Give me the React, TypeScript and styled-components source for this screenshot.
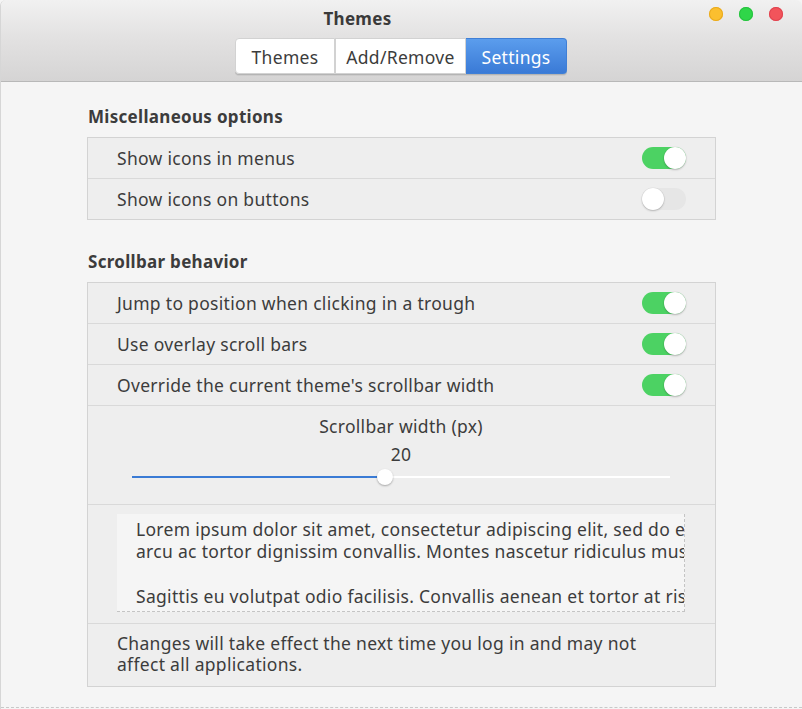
import React from "react";
import styled, { createGlobalStyle } from "styled-components";

const FONT = `"Noto Sans", "Open Sans", sans-serif`;

const Global = createGlobalStyle`
  html, body { margin: 0; padding: 0; background: #f5f5f5; }
  body { font-family: ${FONT}; color: #3c3c3c; letter-spacing: 0.3px; }
  * { box-sizing: border-box; }
`;

const Window = styled.div`
  width: 802px;
  height: 709px;
  background: #f5f5f5;
  border-left: 1px solid #d6d6d6;
  border-top-left-radius: 6px;
  border-top-right-radius: 6px;
  overflow: hidden;
  display: flex;
  flex-direction: column;
  position: relative;
`;

const Header = styled.header`
  height: 82px;
  flex: none;
  background: linear-gradient(to bottom, #f1f1f1 0%, #e3e2e2 45%, #d5d4d4 100%);
  border-bottom: 1px solid #b8b8b8;
  display: flex;
  flex-direction: column;
  align-items: center;
  position: relative;
`;

const Title = styled.div`
  font-weight: 700;
  font-size: 17px;
  line-height: 20px;
  margin-top: 9px;
  margin-right: 88px;
  color: #3a3a3a;
`;

const Lights = styled.div`
  position: absolute;
  top: 7px;
  right: 19px;
  display: flex;
  gap: 16px;
`;

const Light = styled.span<{ $c: string; $b: string }>`
  width: 14px;
  height: 14px;
  border-radius: 50%;
  background: ${(p) => p.$c};
  box-shadow: inset 0 0 0 1px ${(p) => p.$b};
`;

const Tabs = styled.div`
  margin-top: 9px;
  margin-right: 1px;
  display: flex;
  border-radius: 4px;
  box-shadow: 0 1px 0 #b4b4b4, 0 2px 0 rgba(0, 0, 0, 0.05);
`;

const Tab = styled.div<{ $active?: boolean; $w: number }>`
  width: ${(p) => p.$w}px;
  height: 36px;
  display: flex;
  align-items: center;
  justify-content: center;
  padding-top: 1px;
  font-size: 17.5px;
  color: ${(p) => (p.$active ? "#fff" : "#3c3c3c")};
  background: ${(p) =>
    p.$active ? "linear-gradient(to bottom, #5b9ded, #3a7ad6)" : "#ffffff"};
  border: 1px solid ${(p) => (p.$active ? "#3f7fd6" : "#d2d2d2")};
  border-left-width: ${(p) => (p.$active ? 0 : 1)}px;
  &:first-child {
    border-left-width: 1px;
    border-radius: 4px 0 0 4px;
  }
  &:last-child {
    border-radius: 0 4px 4px 0;
  }
`;

const Content = styled.main`
  padding: 25px 86px 0 86px;
  display: flex;
  flex-direction: column;
  flex: 1;
`;

const SectionTitle = styled.h2<{ $top?: number }>`
  margin: ${(p) => p.$top ?? 0}px 0 10px 1px;
  font-size: 17px;
  line-height: 20px;
  font-weight: 700;
  color: #3c3c3c;
`;

const Box = styled.div`
  width: 629px;
  border: 1px solid #d3d3d3;
  background: #eeeeee;
  display: flex;
  flex-direction: column;
`;

const Row = styled.div`
  box-sizing: content-box;
  height: 40px;
  flex: none;
  display: flex;
  align-items: center;
  justify-content: space-between;
  padding: 0 29px 0 29px;
  font-size: 17.5px;
  color: #3c3c3c;
  & + & {
    border-top: 1px solid #d9d9d9;
  }
`;

const SwitchTrack = styled.div<{ $on?: boolean }>`
  width: 44px;
  height: 22px;
  border-radius: 11px;
  background: ${(p) => (p.$on ? "#4cd263" : "#e6e6e6")};
  position: relative;
  flex: none;
`;

const SwitchKnob = styled.div<{ $on?: boolean }>`
  position: absolute;
  top: 0;
  left: ${(p) => (p.$on ? 22 : 0)}px;
  width: 22px;
  height: 22px;
  border-radius: 50%;
  background: #ffffff;
  box-shadow: 0 1px 2px rgba(0, 0, 0, 0.22), 0 0 0 0.5px rgba(0, 0, 0, 0.06);
`;

const Switch = ({ on }: { on?: boolean }) => (
  <SwitchTrack $on={on}>
    <SwitchKnob $on={on} />
  </SwitchTrack>
);

const SliderRow = styled.div`
  border-top: 1px solid #d9d9d9;
  height: 99px;
  flex: none;
  display: flex;
  flex-direction: column;
  align-items: center;
  padding: 10px 45px 0 44px;
  font-size: 17.5px;
  color: #3c3c3c;
`;

const SliderLabel = styled.div`
  line-height: 20px;
`;

const SliderValue = styled.div`
  line-height: 20px;
  margin-top: 8px;
`;

const Track = styled.div`
  margin-top: 12px;
  width: 100%;
  height: 2px;
  background: #ffffff;
  position: relative;
`;

const Fill = styled.div`
  height: 2px;
  background: #3a7bd5;
`;

const Knob = styled.div`
  position: absolute;
  top: -7px;
  width: 16px;
  height: 16px;
  margin-left: -8px;
  border-radius: 50%;
  background: #ffffff;
  box-shadow: 0 1px 2px rgba(0, 0, 0, 0.3);
`;

const TextRow = styled.div`
  border-top: 1px solid #d9d9d9;
  height: 119px;
  flex: none;
  padding: 9px 30px 0 29px;
`;

const TextView = styled.div`
  height: 98px;
  background: #f5f5f5;
  border-right: 1px dashed #c4c4c4;
  border-bottom: 1px dashed #c4c4c4;
  overflow: hidden;
  padding: 4px 0 0 19px;
`;

const Para = styled.p`
  margin: 0;
  white-space: nowrap;
  font-size: 17.5px;
  line-height: 22px;
  color: #3c3c3c;
`;

const Gap = styled.div`
  height: 23px;
`;

const Footer = styled.div`
  border-top: 1px solid #d9d9d9;
  height: 63px;
  flex: none;
  padding: 9px 29px 0 29px;
  font-size: 17.5px;
  line-height: 21px;
  color: #3c3c3c;
`;

const FooterText = styled.div`
  max-width: 540px;
`;

const BottomDash = styled.div`
  position: absolute;
  left: 0;
  right: 0;
  bottom: 1px;
  border-bottom: 1px dashed #c8c8c8;
`;

export default function App() {
  const value = 20;
  const pct = 47.1;
  return (
    <>
      <Global />
      <Window>
        <Header>
          <Title>Themes</Title>
          <Lights>
            <Light $c="#fbbf2f" $b="#e9aa1e" />
            <Light $c="#2fd649" $b="#27c23f" />
            <Light $c="#f2545b" $b="#e04450" />
          </Lights>
          <Tabs>
            <Tab $w={100}>Themes</Tab>
            <Tab $w={131}>Add/Remove</Tab>
            <Tab $w={101} $active>
              Settings
            </Tab>
          </Tabs>
        </Header>
        <Content>
          <SectionTitle>Miscellaneous options</SectionTitle>
          <Box>
            <Row>
              <span>Show icons in menus</span>
              <Switch on />
            </Row>
            <Row>
              <span>Show icons on buttons</span>
              <Switch />
            </Row>
          </Box>
          <SectionTitle $top={32}>Scrollbar behavior</SectionTitle>
          <Box>
            <Row>
              <span>Jump to position when clicking in a trough</span>
              <Switch on />
            </Row>
            <Row>
              <span>Use overlay scroll bars</span>
              <Switch on />
            </Row>
            <Row>
              <span>Override the current theme's scrollbar width</span>
              <Switch on />
            </Row>
            <SliderRow>
              <SliderLabel>Scrollbar width (px)</SliderLabel>
              <SliderValue>{value}</SliderValue>
              <Track>
                <Fill style={{ width: `${pct}%` }} />
                <Knob style={{ left: `${pct}%` }} />
              </Track>
            </SliderRow>
            <TextRow>
              <TextView>
                <Para>
                  Lorem ipsum dolor sit amet, consectetur adipiscing elit, sed do ei
                </Para>
                <Para>
                  arcu ac tortor dignissim convallis. Montes nascetur ridiculus mus
                </Para>
                <Gap />
                <Para>
                  Sagittis eu volutpat odio facilisis. Convallis aenean et tortor at ris
                </Para>
              </TextView>
            </TextRow>
            <Footer>
              <FooterText>
                Changes will take effect the next time you log in and may not affect all applications.
              </FooterText>
            </Footer>
          </Box>
        </Content>
        <BottomDash />
      </Window>
    </>
  );
}
